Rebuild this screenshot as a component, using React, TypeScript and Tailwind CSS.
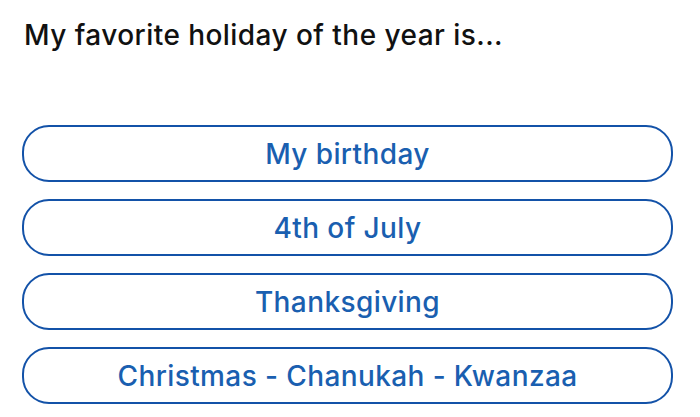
const options = [
  "My birthday",
  "4th of July",
  "Thanksgiving",
  "Christmas - Chanukah - Kwanzaa",
];

export default function App() {
  return (
    <div className="w-[700px] h-[417px] bg-white overflow-hidden font-['Inter',sans-serif]">
      <div className="pl-6 pt-[18px] text-[28px] leading-[34px] font-[450] text-[#111111] tracking-[0.45px]">
        My favorite holiday of the year is...
      </div>
      <div className="mt-[73px] ml-[22px] w-[651px] flex flex-col gap-[17px]">
        {options.map((o) => (
          <button
            key={o}
            className="h-[57px] rounded-[27px] border-2 border-[#1352a8] bg-white flex items-center justify-center text-[28px] font-medium tracking-[0.4px] text-[#1a5fb0]"
          >
            {o}
          </button>
        ))}
      </div>
    </div>
  );
}
